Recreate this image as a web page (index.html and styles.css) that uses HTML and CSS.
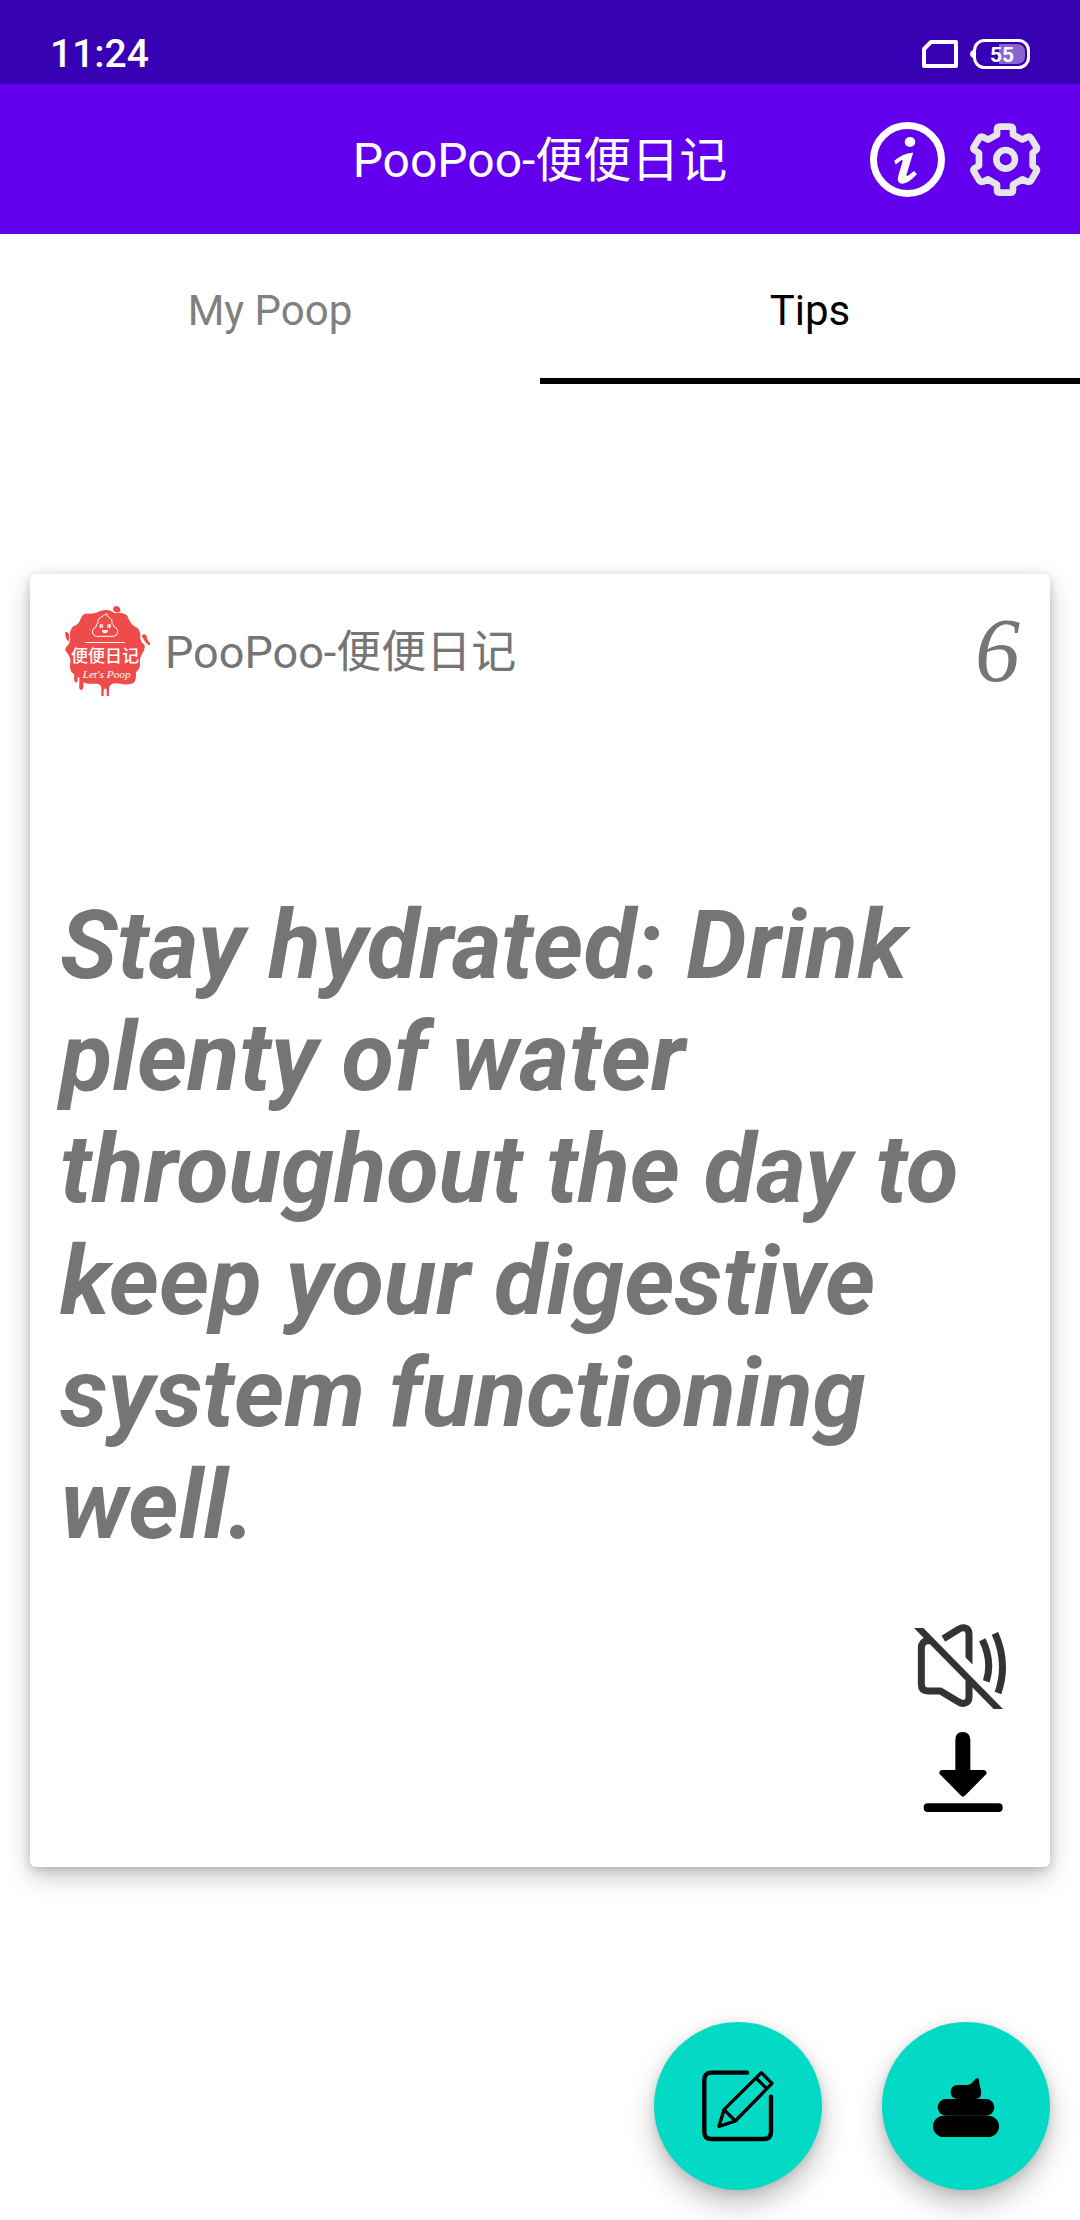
FILE: index.html
```html
<!DOCTYPE html>
<html lang="en">
<head>
<meta charset="utf-8">
<meta name="viewport" content="width=device-width">
<title>PooPoo-便便日记</title>
<link rel="stylesheet" href="styles.css">
</head>
<body>
<div class="status">
  <time class="clock">11:24</time>
  <div class="status-icons">
    <svg width="36" height="28" viewBox="0 0 36 28" fill="none" stroke="#fff" stroke-width="4" stroke-linejoin="round"><path d="M9 2H34V26H2V9Z"/></svg>
    <svg width="60" height="30" viewBox="0 0 60 30"><path d="M5 10Q0 12 0 15T5 20Z" fill="#fff"/><path d="M29 5H46Q55 5 55 13V17Q55 25 46 25H29Z" fill="#8a64d2"/><rect x="4.500" y="1.500" width="54" height="27" rx="10" fill="none" stroke="#fff" stroke-width="3"/><text class="level" x="32" y="23" text-anchor="middle">55</text></svg>
  </div>
</div>
<header class="appbar">
  <h1 class="title">PooPoo-便便日记</h1>
  <div class="actions">
    <button class="icon-button" aria-label="About">
      <svg width="75" height="75" viewBox="90 363 225 225"><circle cx="202.500" cy="475.500" r="102" fill="none" stroke="#fff" stroke-width="21"/><ellipse cx="210" cy="423" rx="16" ry="15" fill="#fff"/><path d="M165 480Q190 459 217 457L198 519Q195 530 206 525L222 513L228 519Q206 544 187 546Q171 546 177 524L189 484Q192 473 182 476L168 487Z" fill="#fff" stroke="#fff" stroke-width="4"/></svg>
    </button>
    <button class="icon-button" aria-label="Settings">
      <svg width="75" height="75" viewBox="384 364 225 225" fill="none" stroke="#e6e6e6" stroke-width="20" stroke-linejoin="round"><path d="M471 402V387Q471 378 480 378H510Q519 378 519 387V402L547 417L562 409Q569 406 573 412L590 440Q592 445 588 448L578 457V495L588 503Q592 507 590 511L573 540Q569 545 562 543L547 536L519 552V568Q519 576 510 576H480Q471 576 471 568V552L444 536L429 543Q422 545 418 540L401 511Q399 507 403 503L417 495V457L403 448Q399 445 401 440L418 412Q422 406 429 409L444 417Z"/><circle cx="497" cy="476" r="28"/></svg>
    </button>
  </div>
</header>
<nav class="tabs">
  <a class="tab" href="#poop">My Poop</a>
  <a class="tab active" href="#tips" aria-current="page">Tips</a>
</nav>
<main class="content" id="tips">
  <article class="card">
    <header class="card-head">
      <svg class="logo" width="88" height="92" viewBox="72 72 264 276">
        <g fill="#ef4b4b">
          <path d="M196 87Q212 86 222 96Q250 92 262 104Q272 132 286 137Q302 144 301 166Q300 182 312 190Q319 200 306 219Q298 232 300 246Q302 262 288 274L287 288Q288 306 272 309Q254 312 240 308Q222 305 216 309Q207 314 207 324V345H200V326Q196 319 191 327V345H184V327Q186 311 172 308H143Q130 306 130 300Q133 327 123 327Q115 324 118 308V292Q114 284 113 292Q114 305 107 305Q100 302 103 284Q103 278 94 273Q88 260 91 245Q94 234 82 216Q70 204 82 194Q93 183 90 166Q88 147 100 136Q116 130 120 118Q127 96 142 98Q158 99 168 95Q184 87 196 87Z"/>
          <path d="M220 90Q216 75 231 75Q243 78 241 92Q231 96 220 90ZM75 154Q82 149 87 160Q90 174 86 181Q77 178 75 154ZM305 164Q314 154 320 166Q320 177 330 186V193Q317 190 305 164ZM270 302Q274 278 288 278Q288 296 277 307Z"/>
        </g>
        <g fill="none" stroke="#fff" stroke-width="3"><path d="M201 98Q200 107 207 109Q220 116 216 127Q222 132 222 138Q234 140 233 154Q231 166 220 166H170Q158 165 157 153Q158 141 168 138Q168 130 174 125Q170 115 182 109Q190 104 201 98Z"/><path d="M135 184.500H254"/></g>
        <circle cx="184" cy="135" r="6" fill="#fff"/><circle cx="207" cy="135" r="6" fill="#fff"/><circle cx="185" cy="135" r="2" fill="#ef4b4b"/><circle cx="206" cy="135" r="2" fill="#ef4b4b"/><path d="M186 147H204Q203 157 195 157T186 147Z" fill="#fff"/>
        <text class="logo-name" x="195" y="243" text-anchor="middle">便便日记</text>
        <text class="logo-tag" x="200" y="290" text-anchor="middle">Let's Poop</text>
      </svg>
      <span class="brand">PooPoo-便便日记</span>
      <span class="number">6</span>
    </header>
    <p class="tip">Stay hydrated: Drink plenty of water throughout the day to keep your digestive system functioning well.</p>
    <div class="card-actions">
      <button class="icon-button" aria-label="Unmute">
        <svg width="96" height="96" viewBox="99 54 288 288" fill="none" stroke="#333" stroke-width="21"><path d="M190 116L236 88Q248 80 260 86Q267 91 267 102V192M150 122H143Q124 124 124 144V252Q124 273 144 273H181L236 306Q248 314 260 307Q267 302 267 291V235"/><path d="M307 119Q338 184 319 244M345 100Q385 190 354 279"/><path d="M244 170L290 216" stroke="#fff" stroke-width="14"/><path d="M102 84H130L369 327H341Z" fill="#333" stroke="none"/></svg>
      </button>
      <button class="icon-button" aria-label="Download">
        <svg width="96" height="96" viewBox="99 372 288 288"><path d="M226 419Q226 396 248 396T271 419V510H312Q322 512 319 522L256 586Q249 594 242 586L179 522Q175 512 186 510H226Z"/><rect x="131" y="610" width="237" height="26" rx="12"/></svg>
      </button>
    </div>
  </article>
</main>
<div class="fabs">
  <button class="fab" aria-label="Write entry">
    <svg width="74" height="74" viewBox="183 207 222 222" fill="none" stroke="#000" stroke-width="13" stroke-linecap="round" stroke-linejoin="round"><path d="M321 218H215Q193 218 193 240V395Q193 417 215 417H371Q393 417 393 395V290"/><path d="M364 218L396 250L286 363L237 379L252 329ZM252 329L286 363M350 236L380 266" stroke-width="10"/></svg>
  </button>
  <button class="fab" aria-label="Log poop">
    <svg width="72" height="72" viewBox="870 210 216 216"><path d="M952 255H984Q995 253 1006 237Q1014 230 1017 240Q1019 263 1023 268V280Q1022 297 1007 297H952Q932 294 932 276T952 255Z"/><rect x="893" y="297" width="170" height="50" rx="25"/><rect x="879" y="347" width="198" height="64" rx="32"/></svg>
  </button>
</div>
</body>
</html>
```
FILE: styles.css
```css
* { box-sizing: border-box; }

body {
  margin: 0;
  min-height: 100vh;
  display: flex;
  flex-direction: column;
  background: #fff;
  color: #757575;
  font-family: Roboto, "Noto Sans CJK SC", sans-serif;
}

svg { display: block; }

.status {
  height: 84px;
  padding: 24px 50px 0;
  display: flex;
  align-items: center;
  justify-content: space-between;
  background: #3700b3;
  color: #fff;
}

.clock { font-size: 39px; font-weight: 500; line-height: 60px; }
.status-icons { display: flex; align-items: center; gap: 12px; }
.level { font-size: 21px; font-weight: 700; fill: #fff; }

.appbar {
  height: 150px;
  padding: 0 37px;
  display: grid;
  grid-template-columns: 1fr auto 1fr;
  align-items: center;
  background: #6200ee;
  color: #fff;
}

.title {
  grid-column: 2;
  margin: 0;
  padding-top: 4px;
  font-size: 48px;
  font-weight: 400;
  line-height: 56px;
}

.actions { display: flex; justify-content: flex-end; gap: 23px; }

.icon-button {
  padding: 0;
  border: 0;
  background: none;
  cursor: pointer;
}

.tabs { display: flex; }

.tab {
  flex: 1;
  height: 150px;
  border-bottom: 6px solid transparent;
  color: #808080;
  font-size: 42px;
  line-height: 154px;
  text-align: center;
  text-decoration: none;
}

.tab.active { color: #000; border-color: #000; }

.content {
  flex: 1;
  display: flex;
  padding: 190px 30px 353px;
}

.card {
  flex: 1;
  display: flex;
  flex-direction: column;
  padding: 29px 30px 47px;
  border-radius: 6px;
  background: #fff;
  box-shadow: 0 10px 24px rgba(0, 0, 0, .22), 0 2px 10px rgba(0, 0, 0, .16);
}

.card-head { display: flex; align-items: center; height: 96px; }
.logo { margin-left: 4px; }
.logo-name { font-family: "Noto Sans CJK SC", sans-serif; font-size: 51px; font-weight: 500; fill: #fff; }
.logo-tag { font-family: "Liberation Serif", serif; font-size: 34px; font-style: italic; fill: #fff; }
.brand { margin-left: 13px; padding-top: 4px; font-size: 45px; line-height: 56px; }

.number {
  margin-left: auto;
  font-family: "Liberation Serif", serif;
  font-size: 90px;
  font-style: italic;
  line-height: 96px;
}

.tip {
  margin: auto 0 57px;
  font-size: 96px;
  font-style: italic;
  font-weight: 700;
  line-height: 112px;
}

.card-actions {
  display: flex;
  flex-direction: column;
  align-items: flex-end;
  gap: 10px;
  padding-right: 11px;
}

.fabs {
  position: absolute;
  right: 30px;
  bottom: 30px;
  display: flex;
  gap: 60px;
}

.fab {
  width: 168px;
  height: 168px;
  padding: 0;
  display: grid;
  place-items: center;
  border: 0;
  border-radius: 50%;
  background: #03dac5;
  box-shadow: 0 14px 28px rgba(0, 0, 0, .24), 0 2px 10px rgba(0, 0, 0, .12);
  cursor: pointer;
}
```
